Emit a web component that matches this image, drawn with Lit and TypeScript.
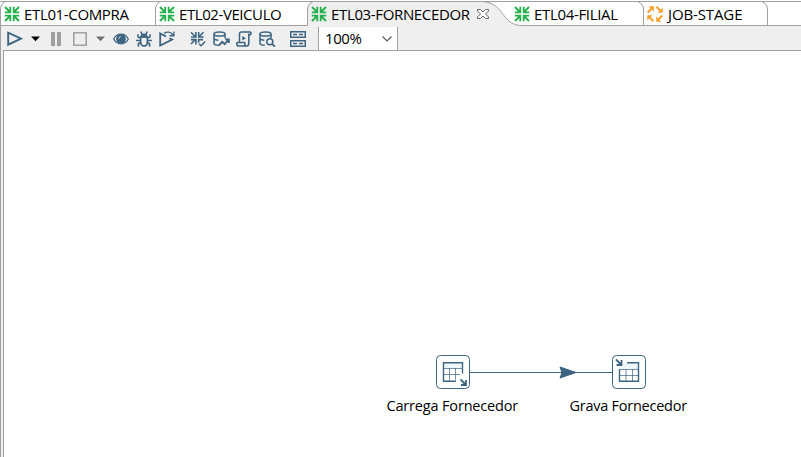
import { LitElement, html, svg, css } from "lit";
import { customElement } from "lit/decorators.js";

const transIcon = svg`<g stroke="currentColor" stroke-width="1.9" fill="none">
  <path d="M1 1 5.5 5.5M15 1 10.5 5.5M1 15 5.5 10.5M15 15 10.5 10.5"/></g>
  <path fill="currentColor" d="M5.4 .8H7.2V7.2H.8V5.4H3.6L5.4 3.6ZM10.6 .8H8.8V7.2H15.2V5.4H12.4L10.6 3.6ZM5.4 15.2H7.2V8.8H.8V10.6H3.6L5.4 12.4ZM10.6 15.2H8.8V8.8H15.2V10.6H12.4L10.6 12.4Z"/>`;

const jobIcon = [0, 90, 180, 270].map((turn) => svg`<g transform="rotate(${turn} 8 8)">
  <path d="M.7 6.5 4.7 2.5" stroke="currentColor" stroke-width="2"/><path d="M1.6 .3H6.8V5.5Z" fill="currentColor"/></g>`);

const database = svg`<ellipse cx="6.5" cy="3" rx="5.5" ry="2.1"/><path d="M1 3V12.2C1 13.3 3 14.2 5.8 14.3M12 3V7.2M1 7.5C1.4 8.5 3 9.1 5.3 9.2"/>`;

interface Tool { kind: string; w: number; art: unknown; }

const tools: Tool[] = [
  { kind: "play", w: 16, art: svg`<path d="M1.2 1.7V13.7L14 7.7Z" stroke-width="1.9"/>` },
  { kind: "caret", w: 9, art: svg`<path d="M0 5.5H9L4.5 10.2Z" fill="#000" stroke="none"/>` },
  { kind: "pause", w: 10, art: svg`<path d="M0 1H4V15H0ZM6 1H10V15H6Z" fill="#a0a0a0" stroke="none"/>` },
  { kind: "stop", w: 14, art: svg`<path d="M.8 1.8H13.2V14.2H.8Z" stroke="#a0a0a0" stroke-width="1.6"/>` },
  { kind: "caret2", w: 9, art: svg`<path d="M0 5.5H9L4.5 10.2Z" fill="#6e6e73" stroke="none"/>` },
  { kind: "eye", w: 16, art: svg`<path d="M.7 8C4 1.6 12 1.6 15.3 8 12 14.4 4 14.4.7 8Z" stroke-width="1.3"/><circle cx="8" cy="8" r="4.1" fill="currentColor"/><path d="M5.8 7.7A2.3 2.3 0 0 1 7.6 5.6" stroke="#efefef" stroke-width="1"/>` },
  { kind: "bug", w: 16, art: svg`<path d="M4.7 6H11.3V11.5C11.3 13.5 10 14.9 8 14.9S4.7 13.5 4.7 11.5Z" stroke-width="1.6"/><path d="M5.3 5.7C5.3 2.5 10.7 2.5 10.7 5.7Z" fill="currentColor"/><path d="M6.2 3.4 4.7.5M9.8 3.4 11.3.5M5 7.4 2 6V3.2M11 7.4 14 6V3.2M5 9.5H.1M11 9.5H15.9M5 11.3 2.4 12.8V15.8M11 11.3 13.6 12.8V15.8" stroke-width="1.6"/>` },
  { kind: "replay", w: 16, art: svg`<path d="M7.2 5.5 1.2 2.5V14.5L13.2 8.6 10.5 7.2" stroke-width="1.8"/><path d="M5.2 2.4C8 .2 11.6 .8 14 4M14.9 .4V4.7H10.4" stroke-width="1.4"/>` },
  { kind: "verify", w: 16, art: svg`<path d="M1 1.2 5 5.2M13.5 1.2 9.5 5.2M1 13 5 9M5.9 1V6H1M8.7 1V6H13.7M5.9 13.5V8.6H1M8.6 11.8V8.6H13" stroke-width="1.6"/><path d="M9 12.7 11.1 14.8 15.2 10.5"/>` },
  { kind: "impact", w: 17, art: svg`${database}<path d="M5.8 14.7 9.2 10.8 11.7 13.2 15.6 8.5M12.2 8.4H15.8V12" stroke-width="1.9"/>` },
  { kind: "sql", w: 16, art: svg`<path d="M3.5 11V3C3.5 1.7 4.2 1 5.3 1H14.2C15.4 1 15.3 4 13.8 4H12.8V12.5C12.8 14 12 15 10.6 15H2C.5 15 .3 11.5 1.5 11.5H8.8V13C8.8 14.2 9.5 15 10.6 15M12.8 4V2.4"/><path d="M6.3 5 10 7.3 6.3 9.6Z" fill="currentColor" stroke="none"/>` },
  { kind: "explore", w: 17, art: svg`${database}<circle cx="10.8" cy="10.8" r="3"/><path d="M13 13 16 15.6" stroke-width="1.8"/>` },
  { kind: "results", w: 16, art: svg`<path d="M.7 .7H15.3V6.3H.7ZM.7 9.7H15.3V15.3H.7Z" stroke-width="1.5"/><path d="M3 3.5H7M9 3.5H13M3 12.5H7M9 12.5H13" stroke-width="1.5"/>` },
];

@customElement("app-root")
export class AppRoot extends LitElement {
  static styles = css`
    :host { display: flex; flex-direction: column; width: 801px; height: 457px; overflow: hidden; background: #fff; color: #000; font: 15px/20px "Open Sans", "Noto Sans", sans-serif; }
    svg { display: block; flex: none; }
    .tabs { position: relative; display: flex; height: 26px; flex: none; }
    .frame { position: absolute; left: 0; top: 0; }
    .tab { position: relative; display: flex; align-items: center; padding: 2px 0 1px 4px; box-sizing: border-box; white-space: nowrap; }
    .tab svg { margin-right: 4px; color: #25b04b; }
    .tab.job svg { color: #f7a030; margin-right: 5px; }
    .t1 { width: 155px; letter-spacing: -0.35px; }
    .t2 { width: 152px; letter-spacing: -0.42px; }
    .t3 { width: 202px; letter-spacing: -0.35px; }
    .t4 { width: 134px; letter-spacing: -0.33px; padding-left: 5px; }
    .t5 { width: 125px; letter-spacing: -0.12px; }
    .tab .close { margin: 0 0 0 7px; color: #666; }
    .toolbar { display: flex; align-items: center; height: 24px; flex: none; background: #efefef; border-left: 1px solid #a0a0a0; padding: 0 0 0 6px; color: #3d6480; }
    .toolbar > svg { margin-top: 2px; }
    .play { margin-right: 8px; }
    .caret { margin-right: 11px; }
    .pause { margin-right: 12px; }
    .stop { margin-right: 9px; }
    .caret2 { margin-right: 8px; }
    .eye, .bug { margin-right: 7px; }
    .replay { margin-right: 15px; }
    .verify { margin-right: 7px; }
    .impact { margin-right: 6px; }
    .sql { margin-right: 7px; }
    .explore { margin-right: 14px; }
    .results { margin-right: 12px; }
    .zoom { display: flex; align-items: center; justify-content: space-between; box-sizing: border-box; width: 80px; height: 23px; margin-top: 1px; padding: 0 5px 0 6px; background: #fff; border: solid #a0a0a0; border-width: 0 1px; color: #000; letter-spacing: -0.4px; line-height: 18px; }
    .zoom span { padding-bottom: 1px; }
    .body { display: flex; flex: 1; background: #efefef; border-left: 1px solid #a0a0a0; padding-left: 2px; }
    .canvas { position: relative; flex: 1; background: #fff; border: solid #a0a0a8; border-width: 1px 0 0 1px; color: #3d6480; }
    .graph { position: absolute; left: 432px; top: 304px; }
    .label { position: absolute; top: 345px; color: #000; white-space: nowrap; font-size: 14.5px; }
    .l1 { left: 382.5px; letter-spacing: -0.17px; }
    .l2 { left: 565.5px; letter-spacing: -0.25px; }
  `;

  private tab(cls: string, name: string, art: unknown, closable = false) {
    return html`<div class="tab ${cls}"><svg width="16" height="16" viewBox="0 0 16 16">${art}</svg><span>${name}</span>${closable
      ? html`<svg class="close" width="12" height="12" viewBox="0 0 12 12" fill="#fff" stroke="currentColor"><path d="M.5 1.5H3.5L6 4 8.5 1.5H11.5V3L8.5 6 11.5 9V10.5H8.5L6 8 3.5 10.5H.5V9L3.5 6 .5 3Z"/></svg>` : ""}</div>`;
  }

  render() {
    return html`
      <div class="tabs">
        <svg class="frame" width="801" height="26" fill="none" stroke="#a0a0a0">
          <path d="M307.5 26V6.5Q308 1.5 314 1.5H481C495 1.5 500 10.5 504 15.5S512 25.5 522 25.5V26Z" fill="#efefef" stroke="none"/>
          <path d="M0 1.5H801M0 25.5H307.5V8Q308 4 313 1.5M.5 26V8Q1 4 5 1.5M155.5 25V8Q156 4 160 1.5M481 1.5C495 1.5 500 10.5 504 15.5S512 25.5 522 25.5H801M638 1.5Q643 4 643.5 8V25M762 1.5Q767 4 767.5 8V25"/>
        </svg>
        ${this.tab("t1", "ETL01-COMPRA", transIcon)}
        ${this.tab("t2", "ETL02-VEICULO", transIcon)}
        ${this.tab("t3", "ETL03-FORNECEDOR", transIcon, true)}
        ${this.tab("t4", "ETL04-FILIAL", transIcon)}
        ${this.tab("t5 job", "JOB-STAGE", jobIcon)}
      </div>
      <div class="toolbar">
        ${tools.map((t) => html`<svg class=${t.kind} width=${t.w} height="16" viewBox="0 0 ${t.w} 16" fill="none" stroke="currentColor" stroke-width="1.5">${t.art}</svg>`)}
        <div class="zoom"><span>100%</span><svg width="10" height="6" fill="none" stroke="#555" stroke-width="1.1"><path d="M.5 .5 5 5 9.5 .5"/></svg></div>
      </div>
      <div class="body"><div class="canvas">
        <svg class="graph" width="212" height="36" fill="none" stroke="currentColor">
          <path d="M34 17.5H176"/><path d="M124 12 140 17.5 124 23 126 17.5Z" fill="currentColor"/>
          <rect x=".5" y=".5" width="33" height="33" rx="4" fill="#fff"/>
          <rect x="176.5" y=".5" width="33" height="33" rx="4" fill="#fff"/>
          <path d="M8 8H26V13H8Z" fill="#eef7fc" stroke="none"/>
          <path d="M20 26.3H7.5V7.8H26.5V18.5" stroke-width="1.4"/>
          <path d="M8 13.5H26M8 19.5H24M13.5 13V26M19.5 13V25" stroke-opacity=".7"/>
          <path d="M24.5 24.5 29.5 29.5M30 25V30H25" stroke-width="1.8"/>
          <path d="M189 8H202V14H184Z" fill="#eef7fc" stroke="none"/>
          <path d="M191 7.8H202.5V26.3H183.5V14" stroke-width="1.4"/>
          <path d="M184 14.5H202M184 20.5H202M190 14V26M196.5 14V26" stroke-opacity=".7"/>
          <path d="M180 4.5 185 9.5M185.5 5V10H180.5" stroke-width="1.8"/>
        </svg>
        <span class="label l1">Carrega Fornecedor</span>
        <span class="label l2">Grava Fornecedor</span>
      </div></div>`;
  }
}
